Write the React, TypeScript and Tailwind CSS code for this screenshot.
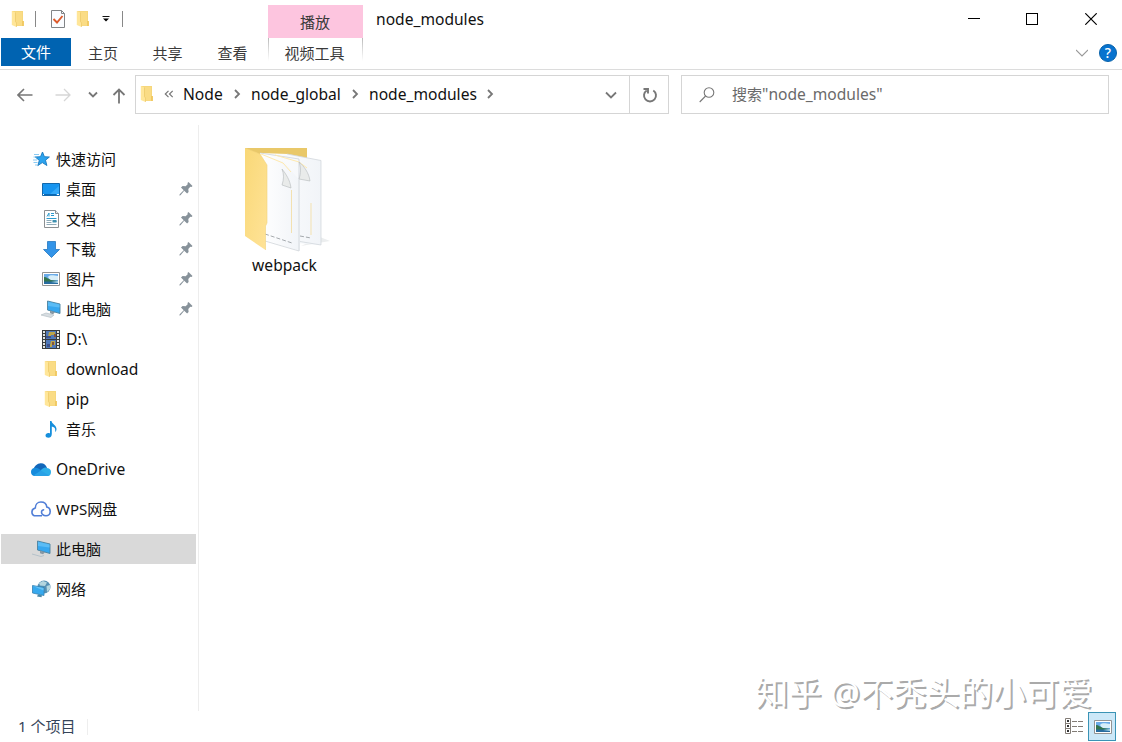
import type { ReactNode } from "react";

type IconProps = { className?: string };

function Folder({ className = "" }: IconProps) {
  return (
    <svg viewBox="0 0 14 18" className={`h-[18px] w-[14px] shrink-0 ${className}`}>
      <path d="M1 1h11v10h1v5H3z" fill="#f6d77c" />
      <path d="M5 2h6v9h1.500v4.500H5z" fill="#fadc85" />
      <path d="M.8 1l3.700 1.600v9L5.500 13v4L.8 15z" fill="#ffe699" />
      <path d="M4.500 2.600v9l1 1.400v4" stroke="#eac45f" strokeWidth=".6" fill="none" />
      <path d="M11 11h1.800v5H11z" fill="#f0c964" />
    </svg>
  );
}

function Star() {
  return (
    <svg viewBox="0 0 18 16" className="h-4 w-[18px]">
      <path d="M10.500 1l1.900 4.700 5 .3-3.900 3.200 1.400 5.300-4.600-2.900-4.500 3 1.500-5.200L3.300 6l5.200-.3z" fill="#2ba3ee" stroke="#1878bd" strokeWidth=".9" />
      <path d="M2 3.500h5M1.500 6H5M1 9h4M1.500 11.500h4M3 14h2" stroke="#6cbdf0" strokeWidth=".8" />
    </svg>
  );
}

function Desktop() {
  return (
    <svg viewBox="0 0 18 13" className="h-[13px] w-[18px]">
      <path d="M.5.500h17v12H.5z" fill="#1795f0" stroke="#1268ac" />
      <path d="M8 11L17 3v8z" fill="#35aafa" />
      <path d="M2 11.500h12" stroke="#0868b4" />
      <path d="M1 11.500h1M15 11.500h2" stroke="#fff" />
    </svg>
  );
}

function Doc() {
  return (
    <svg viewBox="0 0 15 18" className="h-[18px] w-[15px]">
      <path d="M.5.500h11l3 3v14H.5z" fill="#fff" stroke="#8b8f92" />
      <path d="M11.500.500v3h3" fill="#eee" stroke="#8b8f92" />
      <path d="M3 6.500L5 3v3.500M7 3.500h3M7 5.500h3M2.500 8.500h10M9 11.500h3.500" stroke="#2d9bce" fill="none" />
      <path d="M2.500 10.500h5M2.500 12.500h5M2.500 14.500h10" stroke="#8eaab8" />
      <path d="M8.500 10h4v2.500h-4z" fill="#3f91b0" />
    </svg>
  );
}

function Down() {
  return (
    <svg viewBox="0 0 17 17" className="h-[17px] w-[17px]">
      <path d="M4.500.500h8v8h4l-8 8-8-8h4z" fill="#3294e8" stroke="#2577bf" strokeWidth=".8" />
    </svg>
  );
}

function Picture() {
  return (
    <svg viewBox="0 0 18 14" className="h-[14px] w-[18px]">
      <path d="M.5.500h17v13H.5z" fill="#fff" stroke="#939393" />
      <path d="M2 2h14v10H2z" fill="#6aabe8" />
      <path d="M6 5c3-3 6-1 10-1v4H8z" fill="#d7eef9" />
      <path d="M2 5c3 0 4 2 7 3l7 1v1H2z" fill="#33744e" />
      <path d="M2 9.500h14V12H2z" fill="#286c9f" />
      <path d="M9 10l7-1v2z" fill="#a4d4e9" />
    </svg>
  );
}

function Computer({ selected = false }: { selected?: boolean }) {
  return (
    <svg viewBox="0 0 20 18" className="h-[18px] w-5">
      <path d="M6.500 1l12.500 3v9.500L6.500 10z" fill="#37a7ef" stroke="#4c829e" strokeWidth=".9" />
      <path d="M7 1.700L18.500 4.500v3L7 6z" fill="#5bbcf5" />
      <path d="M9 10.800l5 1.400-2 2-3-1z" fill="#8798a4" />
      {selected ? (
        <path d="M1 14l9 2.500 3-1" fill="none" stroke="#b5c2ca" />
      ) : (
        <path d="M0 15l5-2 8 2-3 2.500z" fill="#d8dee2" stroke="#b6c0c6" strokeWidth=".7" />
      )}
    </svg>
  );
}

function Film() {
  return (
    <svg viewBox="0 0 18 19" className="h-[19px] w-[18px]">
      <path d="M0 0h18v19H0z" fill="#383c3e" />
      <path d="M2 1v17M16 1v17" stroke="#e3e6e3" strokeWidth="2" strokeDasharray="2 1" />
      <path d="M4 1h10v8H4zM4 10h10v8H4z" fill="#4f78b8" />
      <path d="M7 2h6v3H9v2H6zM9 11h4v4h-3v2H6v-2h2z" fill="#bba64a" />
      <path d="M4 6h5v2H4zM5 14h3v3H5z" fill="#3c518b" />
      <path d="M12 4h2v3h-2zM10 12h2v3h-2z" fill="#83533e" />
    </svg>
  );
}

function Music() {
  return (
    <svg viewBox="0 0 12 17" className="h-[17px] w-3">
      <path d="M5 0h1.500c.3 3 5 4 5 8 0 1.500-.7 2.500-1.500 3 1-4-1-5-3.200-5.500V13c0 5-6.300 4.500-6.300 1.500 0-2 2.500-3 4.500-2z" fill="#168fdc" />
    </svg>
  );
}

function OneDrive() {
  return (
    <svg viewBox="0 0 20 13" className="h-[13px] w-5">
      <path d="M2.500 7C3 3 6.500 0 10 .2c3 0 5 2 6 4.800L9 10z" fill="#1267ba" />
      <path d="M3 5c3-1 5 .5 8 3l-6 5H4C1 13 0 11 0 9s1-3.500 3-4z" fill="#168bdc" />
      <path d="M10 7c2-2 4-3 6-2 3 .5 4 2 4 4s-1 4-3 4H8z" fill="#2daee9" />
      <path d="M3 12l7-4.500 8 5c-1 .5-2 .5-3 .5H4z" fill="#29a1e6" />
    </svg>
  );
}

function WpsCloud() {
  return (
    <svg viewBox="0 0 20 16" className="h-4 w-5">
      <path d="M11 14.800H5C2 14.800.9 13 .9 10.900c0-2 1.400-3.400 3.400-3.900C4.300 3.500 6.700 1 9.900 1c3.400 0 5.600 2 5.900 5 2 .4 3.400 2.300 3.400 4.400 0 2.600-1.900 4.400-4.200 4.400-2.900 0-4.500-2.100-4.500-3.600 0-1.500 1.200-2.600 2.700-2.500" fill="none" stroke="#507ed7" strokeWidth="1.600" />
    </svg>
  );
}

function Network() {
  return (
    <svg viewBox="0 0 19 18" className="h-[18px] w-[19px]">
      <circle cx="12" cy="7" r="6.500" fill="#5590b3" />
      <path d="M7 3l4-2 4 1.500L13 6 8 5.500zM14.500 6L18 5v4l-3 3z" fill="#b4d6df" />
      <path d="M.5 5.500l11.500 2v8L.5 13z" fill="#37a9ee" stroke="#3581b3" strokeWidth=".8" />
      <path d="M1 6l10.500 2v2.500z" fill="#68c3f4" />
      <path d="M6 14.500l4 .8-.5 2L5 16.500z" fill="#4a88a7" />
    </svg>
  );
}

function Pin() {
  return (
    <svg viewBox="0 0 14 14" className="mr-[3px] ml-auto h-[14px] w-[14px]">
      <path d="M8.500 1l1-1 4 4-1 1-1.200-.2-2 2.300.3 3-1.500 1.400-2.900-2.800L1.500 13.200.3 13.500l.4-1.300 4-4L2 5.500 3.600 4l3 .3 2.100-2z" fill="#87929a" />
    </svg>
  );
}

function BigFolder() {
  return (
    <svg viewBox="0 0 86 104" className="h-[104px] w-[86px]">
      <defs>
        <linearGradient id="front" x1="0" y1="0" x2="1" y2="1">
          <stop stopColor="#f9d877" />
          <stop offset="1" stopColor="#ffe398" />
        </linearGradient>
        <linearGradient id="paper">
          <stop stopColor="#fff" />
          <stop offset="1" stopColor="#f1f4f8" />
        </linearGradient>
      </defs>
      <path d="M56 98l29-5-10-4z" fill="#eceeef" />
      <path d="M0 0h62v60H10z" fill="#e9c869" />
      <path d="M15 5l28 1 33 6.500V97l-50-4z" fill="url(#paper)" />
      <path d="M42 6l34 6.500V97l-21-3.500" fill="none" stroke="#cdd3d8" strokeWidth=".7" />
      <path d="M15 5l24 9 16 19v70l-35-11z" fill="url(#paper)" />
      <path d="M15 5l39 6v92l-34-10" fill="none" stroke="#c9cfd4" strokeWidth=".7" />
      <path d="M16 6l22 9 8 9M30 7l24 7 8 6" fill="none" stroke="#ffe9ad" strokeWidth="1" />
      <path d="M37 21c2 5 2 10 0 16l9 3c-1-8-5-14-9-19zM54 14c2 5 2 11 0 17l11 2c-1-8-6-15-11-19z" fill="#e9ebea" stroke="#b4b9bb" strokeWidth=".6" />
      <path d="M46.500 42v43M66 55v32" stroke="#f3e1b0" strokeWidth="1" />
      <path d="M20 86l27 9M55 88l11 2" stroke="#6d7479" strokeWidth=".6" strokeDasharray="4 2" />
      <path d="M0 0l15 6 7 11v58l-1.500 3v24L0 88z" fill="url(#front)" />
      <path d="M0 0l15 6 7 11v58l-1.500 3v24" fill="none" stroke="#f2d37c" strokeWidth=".6" />
    </svg>
  );
}

function Chevron({ down = false, className = "" }: { down?: boolean; className?: string }) {
  return (
    <svg viewBox="0 0 12 12" className={`h-3 w-3 shrink-0 ${className}`} fill="none" stroke="currentColor" strokeWidth="1.800">
      <path d={down ? "M1 3.500l5 5 5-5" : "M4 2l4 4-4 4"} />
    </svg>
  );
}

type RowProps = { icon: ReactNode; label: string; level?: 0 | 1; pin?: boolean; active?: boolean; latin?: boolean };

function Row({ icon, label, level = 1, pin, active, latin }: RowProps) {
  return (
    <div className={`ml-px flex h-[30px] w-[195px] items-center ${level ? "pl-10" : "pl-[30px]"} ${active ? "bg-[#d9d9d9]" : ""}`}>
      <span className="flex w-5 shrink-0 justify-center">{icon}</span>
      <span className={`ml-[5px] whitespace-nowrap ${latin ? "text-[15.600px]" : ""}`}>{label}</span>
      {pin && <Pin />}
    </div>
  );
}

export default function App() {
  return (
    <div className="relative flex h-[742px] w-[1122px] flex-col overflow-hidden bg-white font-['Noto_Sans','Noto_Sans_CJK_SC',sans-serif] text-[15px] leading-5 text-[#111]">
      <header className="flex h-[70px] shrink-0 border-b border-[#dcdcdc]">
        <div className="flex w-[268px] flex-col">
          <div className="flex h-[38px] items-center pl-[11px]">
            <Folder />
            <span className="ml-[10px] h-4 w-px bg-[#888]" />
            <svg viewBox="0 0 14 18" className="ml-[15px] h-[18px] w-[14px]">
              <path d="M.5.500h10l3 3v14H.5z" fill="#fafcff" stroke="#818487" />
              <path d="M10.500.500v3h3" fill="none" stroke="#818487" />
              <path d="M2.500 9l3.500 3.500 5.500-6.500" fill="none" stroke="#dc5a2c" strokeWidth="1.900" />
            </svg>
            <Folder className="ml-[11px]" />
            <svg viewBox="0 0 8 6" className="ml-[12px] h-[6px] w-2"><path d="M.5.500h7" stroke="#111" /><path d="M1 2.500h6l-3 3z" /></svg>
            <span className="ml-[12px] h-4 w-px bg-[#888]" />
          </div>
          <nav className="flex h-[31px] text-[#3a3a3a]">
            <span className="ml-px flex h-7 w-[70px] items-center justify-center pb-px text-white bg-[#0063b1]">文件</span>
            <span className="flex h-[30px] w-[64px] items-center justify-center">主页</span>
            <span className="flex h-[30px] w-[65px] items-center justify-center">共享</span>
            <span className="flex h-[30px] w-[65px] items-center justify-center">查看</span>
          </nav>
        </div>
        <div className="flex w-[95px] flex-col pt-[5px] text-[#3a3a3a]">
          <span className="flex h-[33px] items-center justify-center bg-[#fdc5df] pr-px">播放</span>
          <div className="flex h-[23px] justify-between">
            <span className="w-px bg-linear-to-b from-[#bbb] to-white" />
            <span className="flex h-[30px] items-center pr-[2px]">视频工具</span>
            <span className="w-px bg-linear-to-b from-[#bbb] to-white" />
          </div>
        </div>
        <span className="mt-[9px] ml-[13px] text-[15.600px]">node_modules</span>
        <div className="ml-auto flex flex-col">
          <div className="flex h-[38px] items-center pr-[25px]">
            <span className="mr-[46px] mb-px h-px w-3 bg-black" />
            <span className="mr-[47px] h-3 w-3 border border-black" />
            <svg viewBox="0 0 12 12" className="h-3 w-3"><path d="M.3.300l11.400 11.400M11.700.300L.3 11.700" stroke="#000" strokeWidth="1.200" /></svg>
          </div>
          <div className="flex h-[30px] items-center justify-end pr-[5px]">
            <svg viewBox="0 0 12 8" className="mr-[11px] h-2 w-3"><path d="M0 1l6 6 6-6" fill="none" stroke="#999" strokeWidth="1.100" /></svg>
            <span className="flex h-[18px] w-[18px] items-center justify-center rounded-full border border-[#0862aa] bg-[#0873cf] text-[14px] font-medium text-white">?</span>
          </div>
        </div>
      </header>

      <div className="flex h-[55px] shrink-0 pt-[5px]">
        <div className="flex h-[39px] w-[135px] items-center text-[#777]">
          <svg viewBox="0 0 16 14" className="ml-[17px] h-[14px] w-4" fill="none" stroke="currentColor" strokeWidth="1.600"><path d="M15.500 7H1M7 1L1 7l6 6" /></svg>
          <svg viewBox="0 0 16 14" className="ml-[22px] h-[14px] w-4" fill="none" stroke="#d6d6d6" strokeWidth="1.300"><path d="M.5 7H15M9 1l6 6-6 6" /></svg>
          <svg viewBox="0 0 10 8" className="ml-[17px] h-2 w-[10px]" fill="none" stroke="currentColor" strokeWidth="1.800"><path d="M1 1.500l4 4 4-4" /></svg>
          <svg viewBox="0 0 14 16" className="mt-[3px] ml-[14px] h-4 w-[14px]" fill="none" stroke="currentColor" strokeWidth="1.800"><path d="M7 15.500V1.500M1.500 7L7 1.500 12.500 7" /></svg>
        </div>
        <div className="flex h-[39px] w-[534px] items-center border border-[#d5d5d5]">
          <div className="flex items-center pb-[2px] text-[15.600px]">
            <Folder className="ml-1" />
            <svg viewBox="0 0 10 8" className="ml-[10px] h-2 w-[10px]" fill="none" stroke="#777" strokeWidth="1.200"><path d="M4.500.800L1.300 4l3.200 3.200M8.700.800L5.500 4l3.200 3.200" /></svg>
            <span className="ml-[9px] w-[42px]">Node</span>
            <Chevron className="ml-[6px] text-[#777]" />
            <span className="ml-2 w-[92px]">node_global</span>
            <Chevron className="ml-[6px] text-[#777]" />
            <span className="ml-2 w-[109px]">node_modules</span>
            <Chevron className="ml-[6px] text-[#777]" />
          </div>
          <Chevron down className="mr-[12px] ml-auto text-[#777]" />
          <span className="flex h-full w-[39px] items-center justify-center border-l border-[#d5d5d5] pl-px">
            <svg viewBox="0 0 16 16" className="h-4 w-4" fill="none" stroke="#777" strokeWidth="1.900"><path d="M11.300 3.500A6 6 0 1 1 4.700 3.500M1.500 2h4.500v4.500" /></svg>
          </span>
        </div>
        <div className="ml-3 flex h-[39px] w-[428px] items-center border border-[#d5d5d5] text-[#6a6a6a]">
          <svg viewBox="0 0 16 16" className="ml-[17px] h-4 w-4" fill="none" stroke="#777" strokeWidth="1.100"><circle cx="10" cy="5.500" r="4.800" /><path d="M6.600 9L.7 15" /></svg>
          <span className="ml-[17px] pb-[2px]">搜索<span className="text-[15.600px]">"node_modules"</span></span>
        </div>
      </div>

      <div className="flex h-[586px] shrink-0">
        <aside className="flex w-[199px] flex-col gap-[10px] border-r border-[#ededed] pt-[19px]">
          <div>
            <Row level={0} icon={<Star />} label="快速访问" />
            <Row icon={<Desktop />} label="桌面" pin />
            <Row icon={<Doc />} label="文档" pin />
            <Row icon={<Down />} label="下载" pin />
            <Row icon={<Picture />} label="图片" pin />
            <Row icon={<Computer />} label="此电脑" pin />
            <Row icon={<Film />} label="D:\" latin />
            <Row icon={<Folder />} label="download" latin />
            <Row icon={<Folder />} label="pip" latin />
            <Row icon={<Music />} label="音乐" />
          </div>
          <Row level={0} icon={<OneDrive />} label="OneDrive" latin />
          <Row level={0} icon={<WpsCloud />} label="WPS网盘" />
          <Row level={0} icon={<Computer selected />} label="此电脑" active />
          <Row level={0} icon={<Network />} label="网络" />
        </aside>
        <main className="pt-[23px] pl-[46px]">
          <div className="flex w-[80px] flex-col">
            <BigFolder />
            <span className="mt-[3px] pr-px text-center text-[15.600px]">webpack</span>
          </div>
        </main>
      </div>

      <footer className="flex h-[31px] shrink-0 items-center">
        <span className="ml-[18px] pb-px text-[#354459]">1 个项目</span>
        <span className="ml-3 h-4 w-px bg-[#eee]" />
        <svg viewBox="0 0 18 16" className="mr-[5px] mb-px ml-auto h-4 w-[18px]" fill="none" stroke="#827c76">
          <path d="M.5.500h5v15h-5zM.5 5.500h5M.5 10.500h5M7 3.500h5M13 3.500h5M7 8.500h5M13 8.500h5M7 13.500h5M13 13.500h5" />
          <path d="M2 3h2M2 8h2M2 13h2" stroke="#333" strokeWidth="2" />
        </svg>
        <span className="mr-[6px] flex h-[29px] w-7 items-center justify-center border border-[#3a93b5] bg-[#cce8f8] pl-[2px]"><Picture /></span>
      </footer>
      <div className="absolute top-[673px] left-[755px] text-[33.200px] leading-10 whitespace-nowrap text-white [text-shadow:2px_2px_0.500px_#aaa]">知乎 @不秃头的小可爱</div>
    </div>
  );
}
